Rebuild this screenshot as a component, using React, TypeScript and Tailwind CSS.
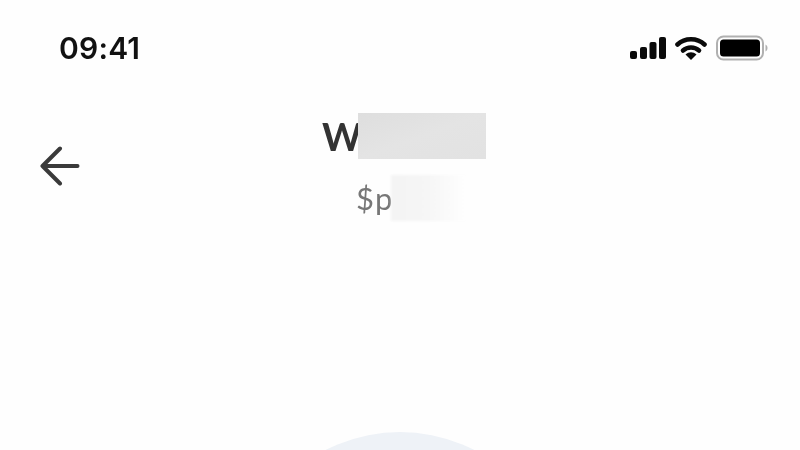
export default function App() {
  return (
    <div className="h-[450px] w-[800px] overflow-hidden bg-[#fefefe] flex flex-col items-stretch" style={{ fontFamily: "Inter, sans-serif" }}>
      <div className="flex items-center justify-between pl-[59px] pr-[32px] pt-[30px] h-[66px]">
        <span className="text-[30px] leading-[36px] font-semibold text-[#111111] tracking-[0.2px] blur-[0.4px]">09:41</span>
        <div className="flex items-center gap-[9px] blur-[0.4px]">
          <svg width="36" height="24" viewBox="0 0 36 24" fill="#0a0a0a">
            <rect x="0" y="15" width="7" height="8" rx="2" />
            <rect x="10" y="11" width="7" height="12" rx="2" />
            <rect x="19.5" y="6" width="7" height="17" rx="2" />
            <rect x="29" y="1" width="7" height="22" rx="2" />
          </svg>
          <svg width="32" height="24" viewBox="0 0 32 24">
            <path d="M2.5 8.5 C10 1.5 22 1.5 29.5 8.5" fill="none" stroke="#0a0a0a" strokeWidth="4.6" strokeLinecap="round" />
            <path d="M8 14.5 C12.5 10.5 19.5 10.5 24 14.5" fill="none" stroke="#0a0a0a" strokeWidth="4.6" strokeLinecap="round" />
            <path d="M10.5 18.5 C14 15.5 18 15.5 21.5 18.5 L16 24 Z" fill="#0a0a0a" />
          </svg>
          <svg width="52" height="26" viewBox="0 0 52 26">
            <rect x="1" y="1.5" width="46" height="23" rx="6.5" fill="none" stroke="#b0b0b0" strokeWidth="2" />
            <rect x="4" y="4.5" width="40" height="17" rx="3.5" fill="#000000" />
            <path d="M49.5 9.5 C51 10.5 51.5 11.5 51.5 13 C51.5 14.5 51 15.5 49.5 16.5 Z" fill="#b0b0b0" />
          </svg>
        </div>
      </div>
      <div className="relative flex flex-col items-center pt-[47px] pl-[8px]">
        <div className="flex items-center h-[46px]">
          <span className="w-[36px] text-[38px] leading-[46px] font-bold text-[#333333] blur-[0.4px]" style={{ fontFamily: "Lato, sans-serif" }}>W</span>
          <div className="relative w-[128px] h-[46px] bg-gradient-to-br from-[#dedede] via-[#e4e4e4] to-[#e2e2e2] blur-[0.5px]" />
        </div>
        <div className="flex items-center h-[46px] mt-[16px] ml-[13px]">
          <span className="w-[35px] text-[31px] leading-[46px] tracking-[1px] text-[#777777] blur-[0.4px]" style={{ fontFamily: "Lato, sans-serif" }}>$p</span>
          <div className="w-[74px] h-[46px] bg-gradient-to-r from-[#f4f4f4] via-[#f6f6f6] to-[#fefefe] blur-[0.8px]" />
        </div>
        <svg className="absolute left-[40px] top-[80px]" width="40" height="40" viewBox="0 0 40 40" fill="none" stroke="#3a3a3a" strokeWidth="4" strokeLinecap="round" strokeLinejoin="round">
          <path d="M37.5 20 H2.5 M20 2.5 L2.5 20 L20 37.5" />
        </svg>
      </div>
      <div className="mt-[211px] mx-auto w-[326px] h-[326px] rounded-full bg-[#eef2f7] shrink-0" />
    </div>
  );
}
